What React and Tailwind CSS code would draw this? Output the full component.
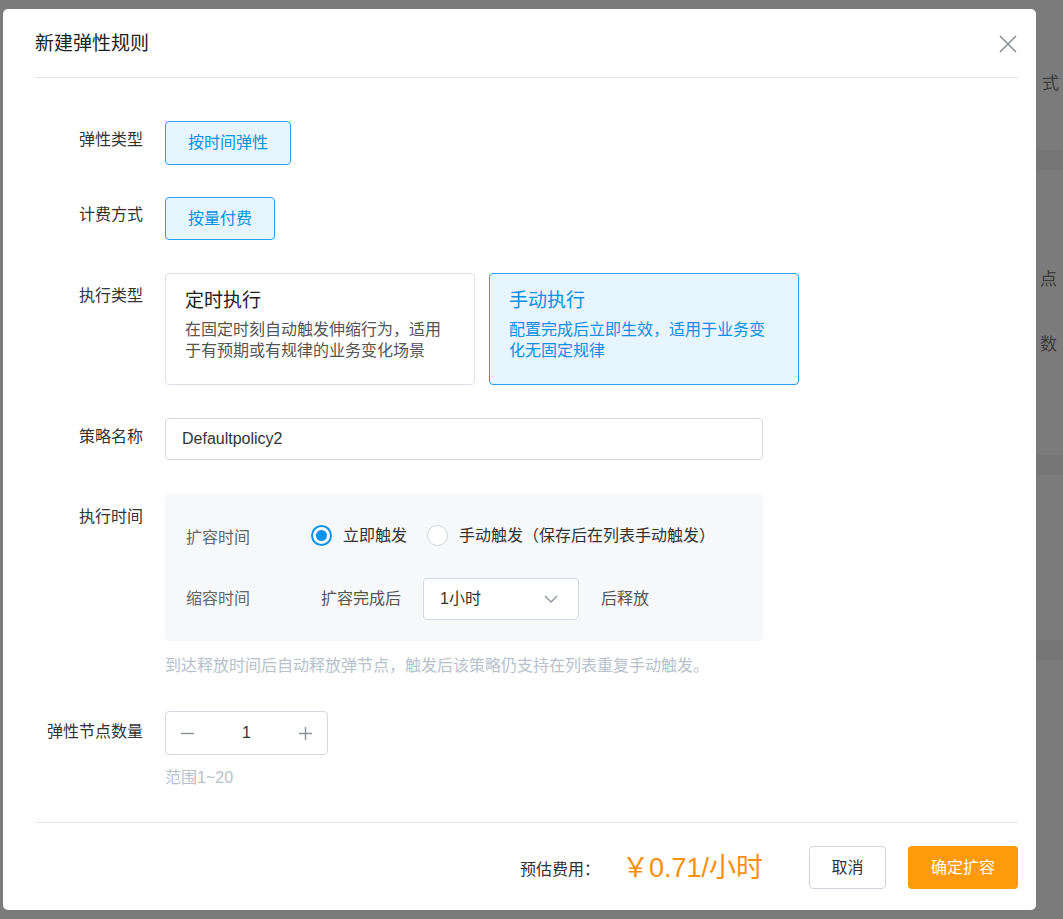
import { useState } from "react";

const font = "font-['Liberation_Sans','Noto_Sans_CJK_SC',sans-serif]";

const FormRow = ({ label, labelTop = "pt-[8px]", children, className = "" }) => (
  <div className={`flex ${className}`}>
    <div className={`w-[108px] shrink-0 text-right text-[16px] leading-[22px] text-[#333] ${labelTop}`}>
      {label}
    </div>
    <div className="ml-[22px] flex-1">{children}</div>
  </div>
);

const Radio = ({ checked, label, onClick }) => (
  <button type="button" onClick={onClick} className="flex items-center gap-[11px]">
    {checked ? (
      <span className="flex h-[21px] w-[21px] items-center justify-center rounded-full border-2 border-[#0a93ec] bg-white">
        <span className="h-[11px] w-[11px] rounded-full bg-[#0a93ec]" />
      </span>
    ) : (
      <span className="h-[21px] w-[21px] rounded-full border border-[#cfd4da] bg-white" />
    )}
    <span className="text-[16px] leading-[22px] text-[#333]">{label}</span>
  </button>
);

const ModeCard = ({ active, title, desc, onClick }) => (
  <div
    onClick={onClick}
    className={`h-[112px] w-[310px] cursor-pointer rounded-[4px] border px-[19px] pt-[14px] ${
      active ? "border-[#2b9ff0] bg-[#e7f5fe]" : "border-[#dcdfe5] bg-white"
    }`}
  >
    <div className={`text-[19px] leading-[26px] ${active ? "text-[#0b8fe6]" : "text-[#222]"}`}>{title}</div>
    <div className={`mt-[5px] text-[16px] leading-[21px] ${active ? "text-[#0b8fe6]" : "text-[#555]"}`}>{desc}</div>
  </div>
);

export default function App() {
  const [mode, setMode] = useState("manual");
  const [trigger, setTrigger] = useState("now");
  const [count, setCount] = useState(1);

  return (
    <div className={`flex h-[919px] w-full overflow-hidden bg-[#7b7b7b] ${font}`}>
      <div className="ml-[3px] mt-[9px] flex h-[901px] w-[1033px] shrink-0 flex-col rounded-[5px] bg-white pl-[32px] pr-[18px]">
        {/* header */}
        <div className="flex h-[69px] shrink-0 items-center justify-between border-b border-[#e4e6ea] pt-[2px]">
          <h2 className="text-[19px] leading-[24px] text-[#222]">新建弹性规则</h2>
          <button type="button" className="text-[#8a9199]">
            <svg width="20" height="20" viewBox="0 0 20 20" fill="none" stroke="currentColor" strokeWidth="1.6">
              <path d="M2 2 L18 18 M18 2 L2 18" />
            </svg>
          </button>
        </div>

        {/* body */}
        <div className="flex flex-1 flex-col pt-[43px]">
          <FormRow label="弹性类型" labelTop="pt-[8px]">
            <div className="inline-flex h-[44px] items-center rounded-[4px] border border-[#2b9ff0] bg-[#e7f5fe] px-[22px] text-[16px] text-[#0b8fe6]">
              按时间弹性
            </div>
          </FormRow>

          <FormRow label="计费方式" labelTop="pt-[7px]" className="mt-[32px]">
            <div className="inline-flex h-[43px] items-center rounded-[4px] border border-[#2b9ff0] bg-[#e7f5fe] px-[22px] text-[16px] text-[#0b8fe6]">
              按量付费
            </div>
          </FormRow>

          <FormRow label="执行类型" labelTop="pt-[12px]" className="mt-[33px]">
            <div className="flex gap-[14px]">
              <ModeCard
                active={mode === "timed"}
                title="定时执行"
                desc="在固定时刻自动触发伸缩行为，适用于有预期或有规律的业务变化场景"
                onClick={() => setMode("timed")}
              />
              <ModeCard
                active={mode === "manual"}
                title="手动执行"
                desc="配置完成后立即生效，适用于业务变化无固定规律"
                onClick={() => setMode("manual")}
              />
            </div>
          </FormRow>

          <FormRow label="策略名称" labelTop="pt-[8px]" className="mt-[33px]">
            <input
              defaultValue="Defaultpolicy2"
              className="h-[42px] w-[598px] rounded-[4px] border border-[#d5d9df] px-[16px] text-[16px] text-[#333] outline-none"
            />
          </FormRow>

          <FormRow label="执行时间" labelTop="pt-[12px]" className="mt-[34px]">
            <div className="h-[147px] w-[598px] rounded-[4px] bg-[#f7f8fa] px-[21px] pt-[28px]">
              <div className="flex items-center">
                <span className="mt-[5px] w-[125px] text-[16px] leading-[22px] text-[#666]">扩容时间</span>
                <Radio checked={trigger === "now"} label="立即触发" onClick={() => setTrigger("now")} />
                <div className="ml-[20px]">
                  <Radio checked={trigger === "manual"} label="手动触发（保存后在列表手动触发）" onClick={() => setTrigger("manual")} />
                </div>
              </div>
              <div className="mt-[29px] flex items-center">
                <span className="w-[135px] text-[16px] leading-[22px] text-[#666]">缩容时间</span>
                <span className="text-[16px] text-[#555]">扩容完成后</span>
                <div className="ml-[22px] flex h-[42px] w-[156px] items-center justify-between rounded-[4px] border border-[#d5d9df] bg-white pl-[16px] pr-[20px]">
                  <span className="text-[16px] text-[#333]">1小时</span>
                  <svg width="14" height="8" viewBox="0 0 14 8" fill="none" stroke="#8a9199" strokeWidth="1.3">
                    <path d="M1 1 L7 7 L13 1" />
                  </svg>
                </div>
                <span className="ml-[22px] text-[16px] text-[#555]">后释放</span>
              </div>
            </div>
            <p className="mt-[14px] text-[16px] leading-[22px] text-[#b7c1cb]">
              到达释放时间后自动释放弹节点，触发后该策略仍支持在列表重复手动触发。
            </p>
          </FormRow>

          <FormRow label="弹性节点数量" labelTop="pt-[10px]" className="mt-[34px]">
            <div className="flex h-[44px] w-[163px] items-center justify-between rounded-[4px] border border-[#d5d9df] px-[14px]">
              <button type="button" onClick={() => setCount((c) => Math.max(1, c - 1))} className="text-[#8a9199]">
                <svg width="15" height="15" viewBox="0 0 15 15" stroke="currentColor" strokeWidth="1.4">
                  <path d="M1 7.5 H14" />
                </svg>
              </button>
              <span className="text-[16px] text-[#333]">{count}</span>
              <button type="button" onClick={() => setCount((c) => Math.min(20, c + 1))} className="text-[#8a9199]">
                <svg width="15" height="15" viewBox="0 0 15 15" stroke="currentColor" strokeWidth="1.4">
                  <path d="M1 7.5 H14 M7.5 1 V14" />
                </svg>
              </button>
            </div>
            <p className="mt-[12px] text-[16px] leading-[22px] text-[#b7c1cb]">范围1~20</p>
          </FormRow>
        </div>

        {/* footer */}
        <div className="flex h-[88px] shrink-0 items-center justify-end border-t border-[#e4e6ea] pt-[2px]">
          <span className="mt-[4px] text-[16px] text-[#333]">预估费用：</span>
          <span className="ml-[22px] text-[27px] leading-[32px] text-[#ff8f0a]">￥0.71/小时</span>
          <button type="button" className="ml-[46px] h-[43px] w-[77px] rounded-[4px] border border-[#d0d5db] bg-white text-[16px] text-[#333]">
            取消
          </button>
          <button type="button" className="ml-[22px] h-[43px] w-[110px] rounded-[4px] bg-[#ff9a0a] text-[16px] text-white">
            确定扩容
          </button>
        </div>
      </div>

      {/* page behind the overlay */}
      <div className="flex flex-1 flex-col pt-[74px] text-[17px] leading-[20px] text-[#3c3c3c]">
        <span className="ml-[6px]">式</span>
        <div className="mt-[56px] h-[20px] bg-[#767676]" />
        <span className="ml-[4px] mt-[100px]">点</span>
        <span className="ml-[4px] mt-[45px]">数</span>
        <div className="mt-[100px] h-[20px] bg-[#767676]" />
        <div className="mt-[165px] h-[20px] bg-[#767676]" />
      </div>
    </div>
  );
}
